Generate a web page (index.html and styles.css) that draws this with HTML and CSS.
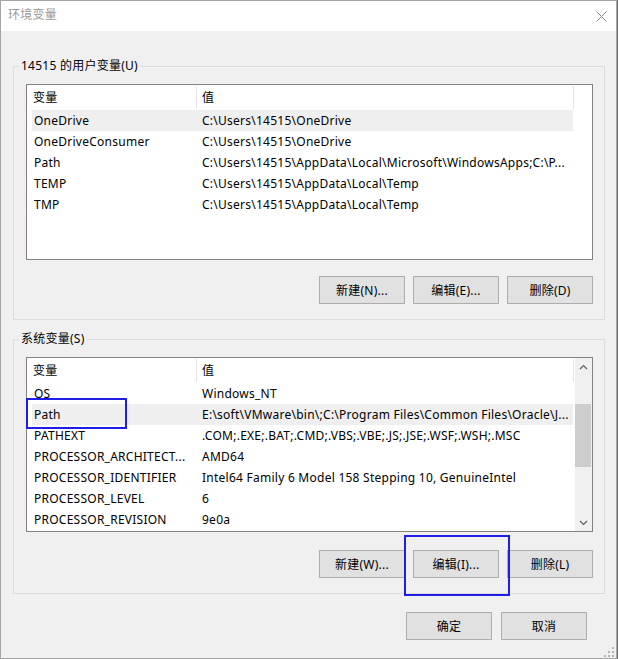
FILE: index.html
```html
<!DOCTYPE html>
<html lang="zh-CN">
<head>
    <meta charset="UTF-8">
    <meta name="viewport" content="width=device-width, initial-scale=1.0">
    <title>环境变量</title>
    <link rel="stylesheet" href="styles.css">
</head>
<body>
    <div class="window">
        <!-- Title Bar -->
        <div class="title-bar">
            <span class="title">环境变量</span>
            <svg class="close-icon" width="11" height="11" viewBox="0 0 11 11">
                <path d="M0.5 0.5 L10.5 10.5 M10.5 0.5 L0.5 10.5" stroke="#8a8a8a" stroke-width="1" fill="none"/>
            </svg>
        </div>

        <div class="content">
            <!-- User Variables -->
            <fieldset class="group">
                <legend>14515 的用户变量(U)</legend>
                <div class="list user-list">
                    <div class="list-main">
                        <div class="list-header">
                            <div class="head-name">变量</div>
                            <div class="head-value">值</div>
                        </div>
                        <div class="list-body">
                            <div class="row hover"><span class="cell-name">OneDrive</span><span class="cell-value">C:\Users\14515\OneDrive</span></div>
                            <div class="row"><span class="cell-name">OneDriveConsumer</span><span class="cell-value">C:\Users\14515\OneDrive</span></div>
                            <div class="row"><span class="cell-name">Path</span><span class="cell-value">C:\Users\14515\AppData\Local\Microsoft\WindowsApps;C:\P...</span></div>
                            <div class="row"><span class="cell-name">TEMP</span><span class="cell-value">C:\Users\14515\AppData\Local\Temp</span></div>
                            <div class="row"><span class="cell-name">TMP</span><span class="cell-value">C:\Users\14515\AppData\Local\Temp</span></div>
                        </div>
                    </div>
                </div>
                <div class="button-row user-buttons">
                    <button>新建(N)...</button>
                    <button>编辑(E)...</button>
                    <button>删除(D)</button>
                </div>
            </fieldset>

            <!-- System Variables -->
            <fieldset class="group system-group">
                <legend>系统变量(S)</legend>
                <div class="list system-list">
                    <div class="list-main">
                        <div class="list-header">
                            <div class="head-name">变量</div>
                            <div class="head-value">值</div>
                        </div>
                        <div class="list-body">
                            <div class="row first-row"><span class="cell-name">OS</span><span class="cell-value">Windows_NT</span></div>
                            <div class="row hover"><span class="cell-name">Path</span><span class="cell-value">E:\soft\VMware\bin\;C:\Program Files\Common Files\Oracle\J...</span></div>
                            <div class="row"><span class="cell-name">PATHEXT</span><span class="cell-value">.COM;.EXE;.BAT;.CMD;.VBS;.VBE;.JS;.JSE;.WSF;.WSH;.MSC</span></div>
                            <div class="row"><span class="cell-name">PROCESSOR_ARCHITECT...</span><span class="cell-value">AMD64</span></div>
                            <div class="row"><span class="cell-name">PROCESSOR_IDENTIFIER</span><span class="cell-value">Intel64 Family 6 Model 158 Stepping 10, GenuineIntel</span></div>
                            <div class="row"><span class="cell-name">PROCESSOR_LEVEL</span><span class="cell-value">6</span></div>
                            <div class="row"><span class="cell-name">PROCESSOR_REVISION</span><span class="cell-value">9e0a</span></div>
                        </div>
                    </div>
                    <div class="scrollbar">
                        <div class="scroll-btn">
                            <svg width="9" height="6" viewBox="0 0 9 6"><path d="M1 5 L4.5 1.5 L8 5" stroke="#606060" stroke-width="1.2" fill="none"/></svg>
                        </div>
                        <div class="scroll-track"><div class="scroll-thumb"></div></div>
                        <div class="scroll-btn">
                            <svg width="9" height="6" viewBox="0 0 9 6"><path d="M1 1 L4.5 4.5 L8 1" stroke="#606060" stroke-width="1.2" fill="none"/></svg>
                        </div>
                    </div>
                </div>
                <div class="button-row system-buttons">
                    <button>新建(W)...</button>
                    <button>编辑(I)...</button>
                    <button>删除(L)</button>
                </div>
            </fieldset>

            <div class="dialog-buttons">
                <button>确定</button>
                <button>取消</button>
            </div>
        </div>

        <!-- annotation boxes -->
        <div class="mark mark-path"></div>
        <div class="mark mark-edit"></div>

        <svg class="grip" width="12" height="12" viewBox="0 0 12 12">
            <rect x="9" y="1" width="2" height="2" fill="#b4b4b4"/>
            <rect x="5" y="5" width="2" height="2" fill="#b4b4b4"/>
            <rect x="9" y="5" width="2" height="2" fill="#b4b4b4"/>
            <rect x="1" y="9" width="2" height="2" fill="#b4b4b4"/>
            <rect x="5" y="9" width="2" height="2" fill="#b4b4b4"/>
            <rect x="9" y="9" width="2" height="2" fill="#b4b4b4"/>
        </svg>
    </div>
</body>
</html>
```

FILE: styles.css
```css
* {
    box-sizing: border-box;
}

html, body {
    margin: 0;
    padding: 0;
}

body {
    background: #6b6b6b;
    font-family: "Noto Sans", "Noto Sans CJK SC", sans-serif;
    font-size: 12px;
    letter-spacing: 0.25px;
    color: #000;
}

.window {
    position: relative;
    width: 617px;
    height: 659px;
    border: 1px solid #a5a5a5;
    background: #f0f0f0;
}

/* Title bar */
.title-bar {
    height: 30px;
    background: #fff;
    display: flex;
    align-items: center;
    justify-content: space-between;
    padding: 0 9px 2px 7px;
}

.title {
    color: #9a9a9a;
    line-height: 16px;
}

.close-icon {
    display: block;
    margin-top: 2px;
}

.content {
    padding: 27px 11px 0 12px;
}

/* Group boxes */
.group {
    width: 592px;
    margin: 0;
    border: 1px solid #dcdcdc;
    padding: 0 11px 15px 5px;
}

.group legend {
    padding: 0 2px;
    line-height: 16px;
}

.system-group {
    margin-top: 11px;
}

/* List views */
.list {
    display: flex;
    width: 567px;
    margin: 10px 0 0 7px;
    border: 1px solid #87817e;
    background: #fff;
}

.user-list {
    height: 176px;
}

.system-list {
    height: 175px;
}

.list-main {
    flex: 1;
    display: flex;
    flex-direction: column;
}

.list-header {
    display: flex;
    align-items: flex-start;
    height: 25px;
    flex-shrink: 0;
}

.system-list .list-header {
    height: 29px;
}

.head-name,
.head-value {
    height: 23px;
    margin-top: 1px;
    line-height: 23px;
    border-right: 1px solid #e5e5e5;
}

.head-name {
    width: 170px;
    padding-left: 6px;
}

.head-value {
    width: 377px;
    padding-left: 5px;
}

.list-body {
    flex: 1;
    overflow: hidden;
}

.row {
    display: flex;
    width: 541px;
    height: 21px;
    margin-left: 5px;
    line-height: 21px;
    white-space: nowrap;
}

.row.hover {
    background: #efefef;
}

.first-row {
    margin-top: -4px;
}

.cell-name {
    width: 164px;
    padding-left: 2px;
    overflow: hidden;
}

.cell-value {
    padding-left: 6px;
    overflow: hidden;
}

/* Scrollbar */
.scrollbar {
    width: 17px;
    display: flex;
    flex-direction: column;
    background: #f0f0f0;
}

.scroll-btn {
    height: 17px;
    display: flex;
    align-items: center;
    justify-content: center;
}

.scroll-track {
    flex: 1;
}

.scroll-thumb {
    width: 16px;
    height: 63px;
    margin-top: 29px;
    background: #cdcdcd;
}

/* Buttons */
button {
    width: 86px;
    height: 28px;
    padding: 0;
    background: #e1e1e1;
    border: 1px solid #adadad;
    font-family: inherit;
    font-size: 12px;
    letter-spacing: inherit;
    color: #000;
}

.button-row {
    display: flex;
    justify-content: flex-end;
    gap: 8px;
    width: 567px;
    margin-left: 7px;
}

.user-buttons {
    margin-top: 16px;
}

.system-buttons {
    margin-top: 18px;
}

.dialog-buttons {
    display: flex;
    justify-content: flex-end;
    gap: 9px;
    margin: 18px 18px 0 0;
}

/* Annotation rectangles */
.mark {
    position: absolute;
    border: 2px solid #1e1ee6;
}

.mark-path {
    left: 25px;
    top: 397px;
    width: 101px;
    height: 31px;
}

.mark-edit {
    left: 403px;
    top: 534px;
    width: 106px;
    height: 61px;
}

.grip {
    position: absolute;
    right: 1px;
    bottom: 0;
}
```
